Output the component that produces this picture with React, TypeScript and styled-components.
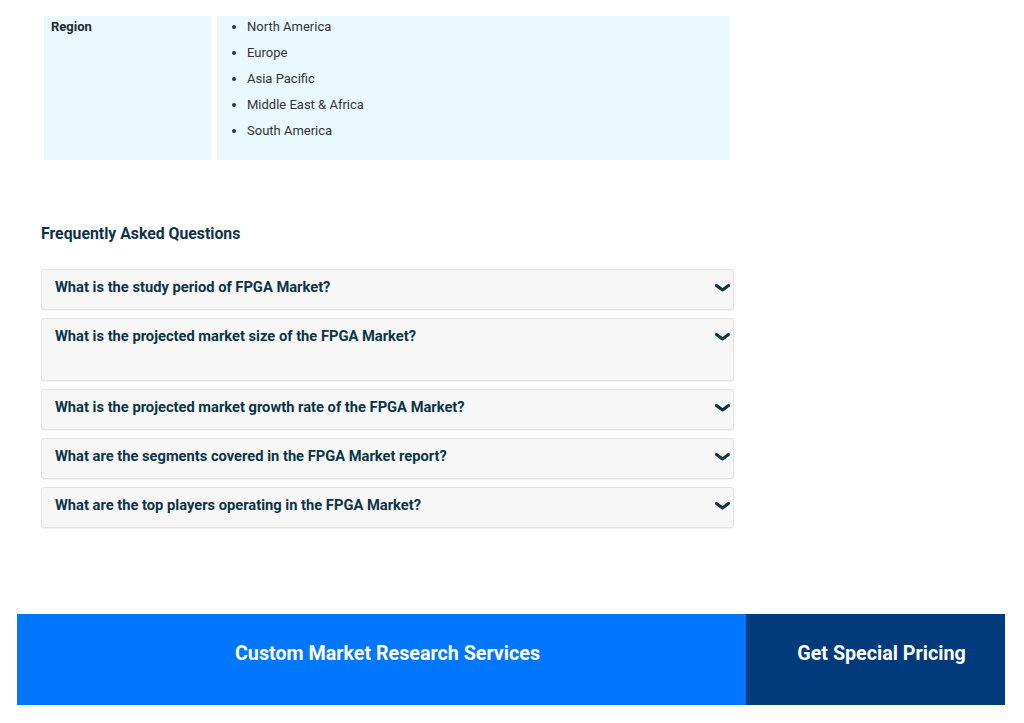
import React from 'react';
import styled, { createGlobalStyle } from 'styled-components';

const GlobalStyle = createGlobalStyle`
  *, *::before, *::after {
    box-sizing: border-box;
  }
  body {
    margin: 0;
    background: #ffffff;
    font-family: Roboto, "Liberation Sans", sans-serif;
  }
`;

const Page = styled.div`
  width: 1024px;
  padding-top: 16px;
`;

const Content = styled.div`
  width: 693px;
  margin-left: 41px;
`;

const SegmentTable = styled.div`
  display: grid;
  grid-template-columns: 167px 1fr;
  column-gap: 6px;
  margin: 0 4px 0 3px;
`;

const Cell = styled.div`
  background: #eaf9fe;
  min-height: 144px;
  font-size: 13px;
  line-height: 17px;
  color: #333333;
`;

const LabelCell = styled(Cell)`
  padding: 2px 7px;
  font-weight: 700;
  color: #1f2a30;
`;

const ValueList = styled.ul`
  margin: 0;
  padding: 2px 0 0 30px;
  list-style: disc;
`;

const ValueItem = styled.li`
  margin-bottom: 9px;
`;

const SectionTitle = styled.h3`
  margin: 64px 0 25px;
  font-size: 15.8px;
  line-height: 20px;
  font-weight: 700;
  color: #0c3447;
`;

const FaqList = styled.div`
  display: flex;
  flex-direction: column;
  gap: 8px;
`;

const FaqItem = styled.div<{ $tall?: boolean }>`
  display: flex;
  align-items: flex-start;
  justify-content: space-between;
  background: #f7f7f7;
  border: 1px solid #e3e3e3;
  border-radius: 3px;
  box-shadow: 0 1px 1px rgba(0, 0, 0, 0.06);
  padding: 8px 3px ${p => (p.$tall ? '35px' : '13px')} 13px;
`;

const Question = styled.span`
  font-size: 14.7px;
  line-height: 18px;
  font-weight: 700;
  color: #0c3447;
`;

const Chevron = styled.svg`
  width: 15px;
  height: 8px;
  margin-top: 6px;
  flex-shrink: 0;
`;

const CtaBar = styled.div`
  display: flex;
  height: 91px;
  margin: 86px 19px 0 17px;
`;

const CtaButton = styled.div<{ $dark?: boolean }>`
  display: flex;
  align-items: center;
  justify-content: center;
  flex: ${p => (p.$dark ? '0 0 259px' : '1')};
  padding: 0 0 12px 12px;
  background: ${p => (p.$dark ? '#023b7c' : '#0077fe')};
  color: #ffffff;
  font-size: 19.7px;
  font-weight: 700;
`;

const regions = ['North America', 'Europe', 'Asia Pacific', 'Middle East & Africa', 'South America'];

const faqs = [
  'What is the study period of FPGA Market?',
  'What is the projected market size of the FPGA Market?',
  'What is the projected market growth rate of the FPGA Market?',
  'What are the segments covered in the FPGA Market report?',
  'What are the top players operating in the FPGA Market?',
];

const App: React.FC = () => (
  <Page>
    <GlobalStyle />
    <Content>
      <SegmentTable>
        <LabelCell>Region</LabelCell>
        <Cell>
          <ValueList>
            {regions.map(r => (
              <ValueItem key={r}>{r}</ValueItem>
            ))}
          </ValueList>
        </Cell>
      </SegmentTable>

      <SectionTitle>Frequently Asked Questions</SectionTitle>
      <FaqList>
        {faqs.map((q, i) => (
          <FaqItem key={q} $tall={i === 1}>
            <Question>{q}</Question>
            <Chevron viewBox="0 0 15 8">
              <polyline
                points="1.5,1.5 7.5,6 13.5,1.5"
                fill="none"
                stroke="#0c3447"
                strokeWidth="3"
                strokeLinecap="round"
                strokeLinejoin="round"
              />
            </Chevron>
          </FaqItem>
        ))}
      </FaqList>
    </Content>

    <CtaBar>
      <CtaButton>Custom Market Research Services</CtaButton>
      <CtaButton $dark>Get Special Pricing</CtaButton>
    </CtaBar>
  </Page>
);

export default App;
